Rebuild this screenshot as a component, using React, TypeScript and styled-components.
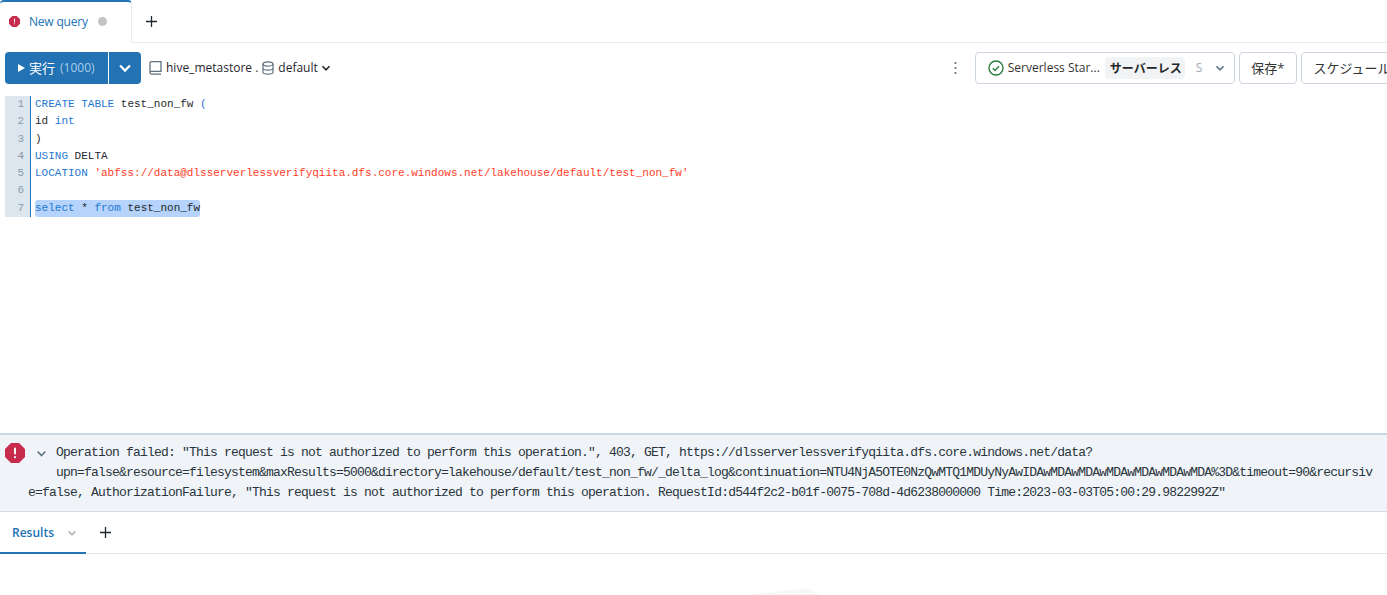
import { createGlobalStyle } from "styled-components";
import styled from "styled-components";

const GlobalStyle = createGlobalStyle`
  html, body {
    margin: 0;
    padding: 0;
    background: #fff;
  }
  body {
    font-family: "Open Sans", "Noto Sans CJK JP", sans-serif;
    color: #1f272d;
  }
`;

const Page = styled.div`
  display: flex;
  flex-direction: column;
  width: 1387px;
  height: 595px;
  overflow: hidden;
`;

const TabBar = styled.div`
  display: flex;
  flex: none;
  height: 43px;
  box-sizing: border-box;
`;

const ActiveTab = styled.div`
  display: flex;
  align-items: center;
  width: 132px;
  box-sizing: border-box;
  padding-left: 9px;
  padding-bottom: 2px;
  border-top: 2px solid #2272b4;
  border-right: 1px solid #e8ecf0;
  border-radius: 4px 4px 0 0;
  color: #2272b4;
  font-size: 12px;
  font-weight: 500;
  letter-spacing: -0.2px;
`;

const TabLabel = styled.span`
  margin-left: 9px;
`;

const UnsavedDot = styled.span`
  width: 9px;
  height: 9px;
  margin-left: 10px;
  border-radius: 50%;
  background: #c4c4c4;
`;

const AddTabArea = styled.div`
  display: flex;
  flex: 1;
  align-items: center;
  padding-left: 14px;
  border-bottom: 1px solid #e8ecf0;
`;

const Toolbar = styled.div`
  display: flex;
  flex: none;
  align-items: center;
  height: 33px;
  margin-top: 8px;
  padding-left: 5px;
  white-space: nowrap;
`;

const RunGroup = styled.div`
  display: flex;
  flex: none;
  height: 32px;
  border-radius: 4px;
  overflow: hidden;
  color: #fff;
  background: #2272b4;
`;

const RunButton = styled.div`
  display: flex;
  align-items: center;
  flex: none;
  width: 104px;
  box-sizing: border-box;
  padding-left: 13px;
  border-right: 1px solid #fff;
  font-size: 13px;
`;

const RunLabel = styled.span`
  margin-left: 4px;
`;

const RunLimit = styled.span`
  margin-left: 5px;
  color: #a9cce8;
  font-size: 12px;
`;

const RunMenu = styled.div`
  display: flex;
  flex: none;
  width: 32px;
  align-items: center;
  justify-content: center;
`;

const Catalog = styled.div`
  display: flex;
  flex: none;
  align-items: center;
  margin-left: 8px;
  font-size: 12px;
  color: #1f272d;
`;

const CatalogName = styled.span`
  margin-left: 4px;
`;

const CatalogCaret = styled.span`
  display: flex;
  margin-left: 3px;
`;

const DatabaseIcon = styled.svg`
  margin-left: 4px;
`;

const Kebab = styled.div`
  display: flex;
  flex: none;
  align-items: center;
  justify-content: center;
  width: 12px;
  margin-left: 619px;
  color: #5f7281;
`;

const ComputePicker = styled.div`
  display: flex;
  align-items: center;
  flex: none;
  width: 260px;
  height: 32px;
  box-sizing: border-box;
  margin-left: 13px;
  padding-left: 12px;
  border: 1px solid #cbd5df;
  border-radius: 4px;
  font-size: 12px;
`;

const ComputeName = styled.span`
  margin-left: 4px;
  color: #333;
`;

const ComputeTag = styled.span`
  margin-left: 5px;
  padding: 2px 3px 2px 5px;
  border-radius: 4px;
  background: #f1f3f5;
  font-weight: 700;
`;

const ComputeSize = styled.span`
  margin-left: 11px;
  color: #a3aeb8;
`;

const ComputeCaret = styled.span`
  display: flex;
  margin-left: 13px;
  color: #5f7281;
`;

const OutlineButton = styled.div`
  display: flex;
  flex: none;
  align-items: center;
  height: 32px;
  box-sizing: border-box;
  margin-left: 4px;
  padding: 0 11.5px;
  border: 1px solid #cbd5df;
  border-radius: 4px;
  font-size: 13px;
  color: #333;
`;

const Editor = styled.div`
  display: flex;
  flex: 1;
  min-height: 0;
  margin-top: 12px;
  padding-left: 5px;
  font-family: "Liberation Mono", monospace;
  font-size: 11px;
  line-height: 17.3px;
`;

const Gutter = styled.div`
  width: 25px;
  height: 121px;
  box-sizing: border-box;
  padding-right: 6px;
  background: #dce6ef;
  color: #8d9aa6;
  text-align: right;
`;

const Lines = styled.div`
  height: 121px;
  padding-left: 4px;
  border-left: 1px solid #2272b4;
  white-space: pre;
`;

const CodeLine = styled.div`
  height: 17.3px;
`;

const Selected = styled.span`
  display: inline-block;
  height: 17.3px;
  border-radius: 3px;
  background: #b5d3fb;
`;

const Keyword = styled.span`
  color: #1f78d1;
`;

const Str = styled.span`
  color: #ff3d1f;
`;

const ErrorPane = styled.div`
  display: flex;
  flex: none;
  flex-direction: column;
  height: 79px;
  box-sizing: border-box;
  padding-top: 8px;
  border-top: 2px solid #cbd8e6;
  border-bottom: 1px solid #d5dbe1;
  background: #f0f4f8;
  font-family: "Liberation Mono", monospace;
  font-size: 13px;
  letter-spacing: -0.8px;
  line-height: 20px;
  color: #29343c;
`;

const ErrorFirst = styled.div`
  display: flex;
  align-items: flex-start;
  padding-left: 5px;
  white-space: pre;
`;

const ErrorIcon = styled.span`
  display: flex;
  flex: none;
  width: 31px;
`;

const ErrorCaret = styled.span`
  display: flex;
  flex: none;
  width: 20px;
  padding-top: 5px;
  color: #5f7281;
`;

const ErrorIndented = styled.div`
  padding-left: 56px;
  white-space: pre;
`;

const ErrorWrapped = styled.div`
  padding-left: 28px;
  white-space: pre;
`;

const ResultsBar = styled.div`
  display: flex;
  flex: none;
  align-items: stretch;
  height: 42px;
  box-sizing: border-box;
  border-bottom: 1px solid #e3e6e9;
`;

const ResultsTab = styled.div`
  display: flex;
  align-items: center;
  width: 86px;
  box-sizing: border-box;
  margin-bottom: -1px;
  padding: 1px 0 0 12px;
  border-bottom: 2px solid #2272b4;
  color: #2272b4;
  font-size: 12px;
  font-weight: 600;
`;

const ResultsCaret = styled.span`
  display: flex;
  margin-left: 13px;
  color: #a3aeb8;
`;

const ResultsAdd = styled.div`
  display: flex;
  align-items: center;
  padding-left: 14px;
`;

const ResultsBody = styled.div`
  display: flex;
  flex: none;
  height: 41px;
  box-sizing: border-box;
  justify-content: center;
  padding: 34px 0 0 183px;
`;

function Plus() {
  return (
    <svg width="11" height="11" viewBox="0 0 11 11" fill="none" stroke="#1f272d" strokeWidth="1.3">
      <path d="M5.5 0v11M0 5.5h11" />
    </svg>
  );
}

function Chevron({ size = 10, width = 1.5 }: { size?: number; width?: number }) {
  return (
    <svg width={size} height={size} viewBox="0 0 10 10" fill="none" stroke="currentColor" strokeWidth={width}>
      <path d="M1.5 3.2 5 6.8l3.5-3.6" />
    </svg>
  );
}

function Octagon({ size }: { size: number }) {
  return (
    <svg width={size} height={size} viewBox="0 0 20 20">
      <path d="M6 0h8l6 6v8l-6 6H6l-6-6V6z" fill="#c82b4c" />
      <rect x="9" y="4.5" width="2" height="7" rx="1" fill="#fff" />
      <rect x="9" y="13" width="2" height="2.2" rx="1" fill="#fff" />
    </svg>
  );
}

function App() {
  return (
    <>
      <GlobalStyle />
      <Page>
        <TabBar>
          <ActiveTab>
            <Octagon size={11} />
            <TabLabel>New query</TabLabel>
            <UnsavedDot />
          </ActiveTab>
          <AddTabArea>
            <Plus />
          </AddTabArea>
        </TabBar>

        <Toolbar>
          <RunGroup>
            <RunButton>
              <svg width="7" height="8" viewBox="0 0 7 8" fill="#fff">
                <path d="M0 0l7 4-7 4z" />
              </svg>
              <RunLabel>実行</RunLabel>
              <RunLimit>(1000)</RunLimit>
            </RunButton>
            <RunMenu>
              <Chevron size={14} width={1.6} />
            </RunMenu>
          </RunGroup>
          <Catalog>
            <svg width="13" height="14" viewBox="0 0 13 14" fill="none" stroke="#5f7281" strokeWidth="1.3">
              <path d="M1 11.500V2a1.300 1.300 0 0 1 1.300-1.300H12v9.600H2.300A1.500 1.500 0 0 0 1 11.500a1.500 1.500 0 0 0 1.300 1.600H12" />
            </svg>
            <CatalogName>hive_metastore .</CatalogName>
            <DatabaseIcon width="12" height="14" viewBox="0 0 12 14" fill="none" stroke="#5f7281" strokeWidth="1.2">
              <ellipse cx="6" cy="3" rx="5" ry="2.2" />
              <path d="M1 3v8c0 1.200 2.200 2.200 5 2.200s5-1 5-2.200V3M1 7c0 1.200 2.200 2.200 5 2.200S11 8.200 11 7" />
            </DatabaseIcon>
            <CatalogName>default</CatalogName>
            <CatalogCaret>
              <Chevron size={10} width={1.5} />
            </CatalogCaret>
          </Catalog>
          <Kebab>
            <svg width="3" height="14" viewBox="0 0 3 14" fill="currentColor">
              <circle cx="1.5" cy="2" r="1.1" />
              <circle cx="1.5" cy="7" r="1.1" />
              <circle cx="1.5" cy="12" r="1.1" />
            </svg>
          </Kebab>
          <ComputePicker>
            <svg width="16" height="16" viewBox="0 0 16 16" fill="none" stroke="#277c43" strokeWidth="1.4">
              <circle cx="8" cy="8" r="7" />
              <path d="M4.800 8.200l2.200 2.200 4-4.200" />
            </svg>
            <ComputeName>Serverless Star...</ComputeName>
            <ComputeTag>サーバーレス</ComputeTag>
            <ComputeSize>S</ComputeSize>
            <ComputeCaret>
              <Chevron size={10} width={1.6} />
            </ComputeCaret>
          </ComputePicker>
          <OutlineButton>保存*</OutlineButton>
          <OutlineButton>スケジュール</OutlineButton>
        </Toolbar>

        <Editor>
          <Gutter>
            <div>1</div>
            <div>2</div>
            <div>3</div>
            <div>4</div>
            <div>5</div>
            <div>6</div>
            <div>7</div>
          </Gutter>
          <Lines>
            <CodeLine>
              <Keyword>CREATE TABLE</Keyword> test_non_fw <Keyword>(</Keyword>
            </CodeLine>
            <CodeLine>
              id <Keyword>int</Keyword>
            </CodeLine>
            <CodeLine>)</CodeLine>
            <CodeLine>
              <Keyword>USING</Keyword> DELTA
            </CodeLine>
            <CodeLine>
              <Keyword>LOCATION</Keyword>{" "}
              <Str>'abfss://data@dlsserverlessverifyqiita.dfs.core.windows.net/lakehouse/default/test_non_fw'</Str>
            </CodeLine>
            <CodeLine />
            <CodeLine>
              <Selected>
                <Keyword>select</Keyword> * <Keyword>from</Keyword> test_non_fw
              </Selected>
            </CodeLine>
          </Lines>
        </Editor>

        <ErrorPane>
          <ErrorFirst>
            <ErrorIcon>
              <Octagon size={20} />
            </ErrorIcon>
            <ErrorCaret>
              <Chevron size={11} width={1.5} />
            </ErrorCaret>
            <span>
              Operation failed: "This request is not authorized to perform this operation.", 403, GET, https://dlsserverlessverifyqiita.dfs.core.windows.net/data?
            </span>
          </ErrorFirst>
          <ErrorIndented>
            upn=false&amp;resource=filesystem&amp;maxResults=5000&amp;directory=lakehouse/default/test_non_fw/_delta_log&amp;continuation=NTU4NjA5OTE0NzQwMTQ1MDUyNyAwIDAwMDAwMDAwMDAwMDAwMDAwMDA%3D&amp;timeout=90&amp;recursiv
          </ErrorIndented>
          <ErrorWrapped>
            e=false, AuthorizationFailure, "This request is not authorized to perform this operation. RequestId:d544f2c2-b01f-0075-708d-4d6238000000 Time:2023-03-03T05:00:29.9822992Z"
          </ErrorWrapped>
        </ErrorPane>

        <ResultsBar>
          <ResultsTab>
            Results
            <ResultsCaret>
              <Chevron size={10} width={1.4} />
            </ResultsCaret>
          </ResultsTab>
          <ResultsAdd>
            <Plus />
          </ResultsAdd>
        </ResultsBar>

        <ResultsBody>
          <svg width="70" height="7" viewBox="0 0 70 7" fill="#f7f7f7">
            <path d="M0 7 50 1q4-1 8 0l12 6z" />
          </svg>
        </ResultsBody>
      </Page>
    </>
  );
}

export default App;
